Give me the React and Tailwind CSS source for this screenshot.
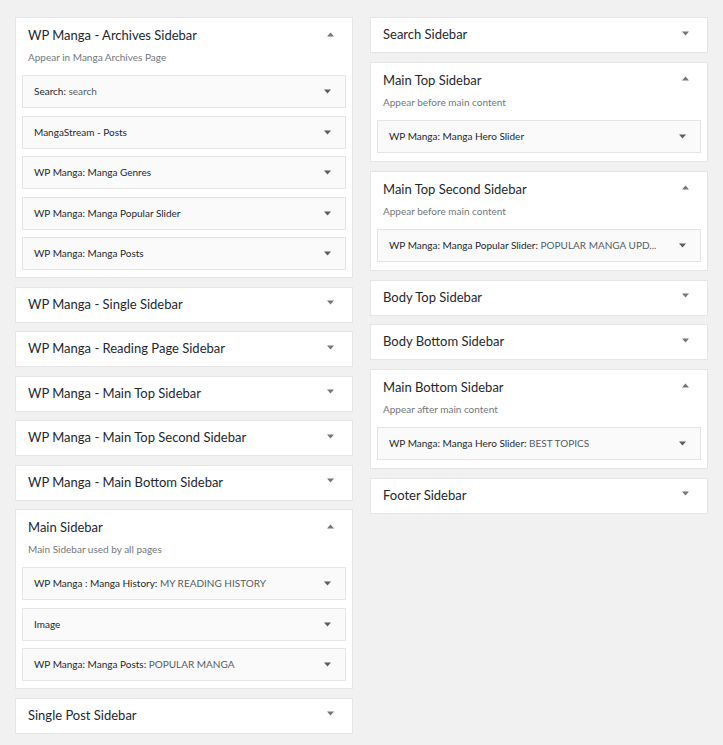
import React from 'react';

const left = [
  {
    name: 'WP Manga - Archives Sidebar',
    desc: 'Appear in Manga Archives Page',
    widgets: [
      ['Search', 'search'],
      ['MangaStream - Posts'],
      ['WP Manga: Manga Genres'],
      ['WP Manga: Manga Popular Slider'],
      ['WP Manga: Manga Posts'],
    ],
  },
  { name: 'WP Manga - Single Sidebar' },
  { name: 'WP Manga - Reading Page Sidebar' },
  { name: 'WP Manga - Main Top Sidebar' },
  { name: 'WP Manga - Main Top Second Sidebar' },
  { name: 'WP Manga - Main Bottom Sidebar' },
  {
    name: 'Main Sidebar',
    desc: 'Main Sidebar used by all pages',
    widgets: [
      ['WP Manga : Manga History', 'MY READING HISTORY'],
      ['Image'],
      ['WP Manga: Manga Posts', 'POPULAR MANGA'],
    ],
  },
  { name: 'Single Post Sidebar' },
];

const right = [
  { name: 'Search Sidebar' },
  {
    name: 'Main Top Sidebar',
    desc: 'Appear before main content',
    widgets: [['WP Manga: Manga Hero Slider']],
  },
  {
    name: 'Main Top Second Sidebar',
    desc: 'Appear before main content',
    widgets: [['WP Manga: Manga Popular Slider', 'POPULAR MANGA UPD...']],
  },
  { name: 'Body Top Sidebar' },
  { name: 'Body Bottom Sidebar' },
  {
    name: 'Main Bottom Sidebar',
    desc: 'Appear after main content',
    widgets: [['WP Manga: Manga Hero Slider', 'BEST TOPICS']],
  },
  { name: 'Footer Sidebar' },
];

function Arrow({ up, className }) {
  return (
    <svg width="7" height="5" viewBox="0 0 7 5" className={className}>
      {up ? <path d="M0 4.5 L3.5 0.5 L7 4.5 Z" fill="currentColor" /> : <path d="M0 0.5 L7 0.5 L3.5 4.5 Z" fill="currentColor" />}
    </svg>
  );
}

function Widget({ title, inTitle }) {
  return (
    <div className="h-[33px] bg-[#fafafa] border border-[#e5e5e5] flex items-center justify-between pl-[11px] pr-[14px]">
      <span className="text-[10px] text-[#23282d] whitespace-nowrap">
        {title}
        {inTitle && <>: <span className="text-[#555d66]">{inTitle}</span></>}
      </span>
      <Arrow className="text-[#555d66]" />
    </div>
  );
}

function Sidebar({ name, desc, widgets, tall }) {
  if (!widgets) {
    return (
      <div className="h-[36px] bg-white border border-[#e5e5e5] flex items-center justify-between pl-[12px] pr-[18px]">
        <h2 className="text-[13px] text-[#23282d]">{name}</h2>
        <Arrow className="text-[#72777c] -mt-[4px]" />
      </div>
    );
  }
  return (
    <div className={tall ? 'bg-white border border-[#e5e5e5] px-[6px] pb-[8.5px]' : 'bg-white border border-[#e5e5e5] px-[6px] pb-[7px]'}>
      <div className="h-[34px] pt-[2px] flex items-center justify-between pl-[6px] pr-[12px]">
        <h2 className="text-[13px] text-[#23282d]">{name}</h2>
        <Arrow up className="text-[#72777c] -mt-[4px]" />
      </div>
      <p className="-mt-[2px] mb-[11px] pl-[6px] leading-[14px] text-[10px] text-[#72777c]">{desc}</p>
      <div className="flex flex-col gap-[7.5px]">
        {widgets.map((w, i) => (
          <Widget key={i} title={w[0]} inTitle={w[1]} />
        ))}
      </div>
    </div>
  );
}

export default function App() {
  return (
    <div className="min-h-screen bg-[#f1f1f1] pt-[17px] pl-[15px] flex gap-[17px] items-start" style={{ fontFamily: 'Lato, sans-serif' }}>
      <div className="w-[338px] flex flex-col gap-[8.5px]">
        {left.map((s) => (
          <Sidebar key={s.name} {...s} />
        ))}
      </div>
      <div className="w-[338px] flex flex-col gap-[8.5px]">
        {right.map((s) => (
          <Sidebar key={s.name} tall {...s} />
        ))}
      </div>
    </div>
  );
}
